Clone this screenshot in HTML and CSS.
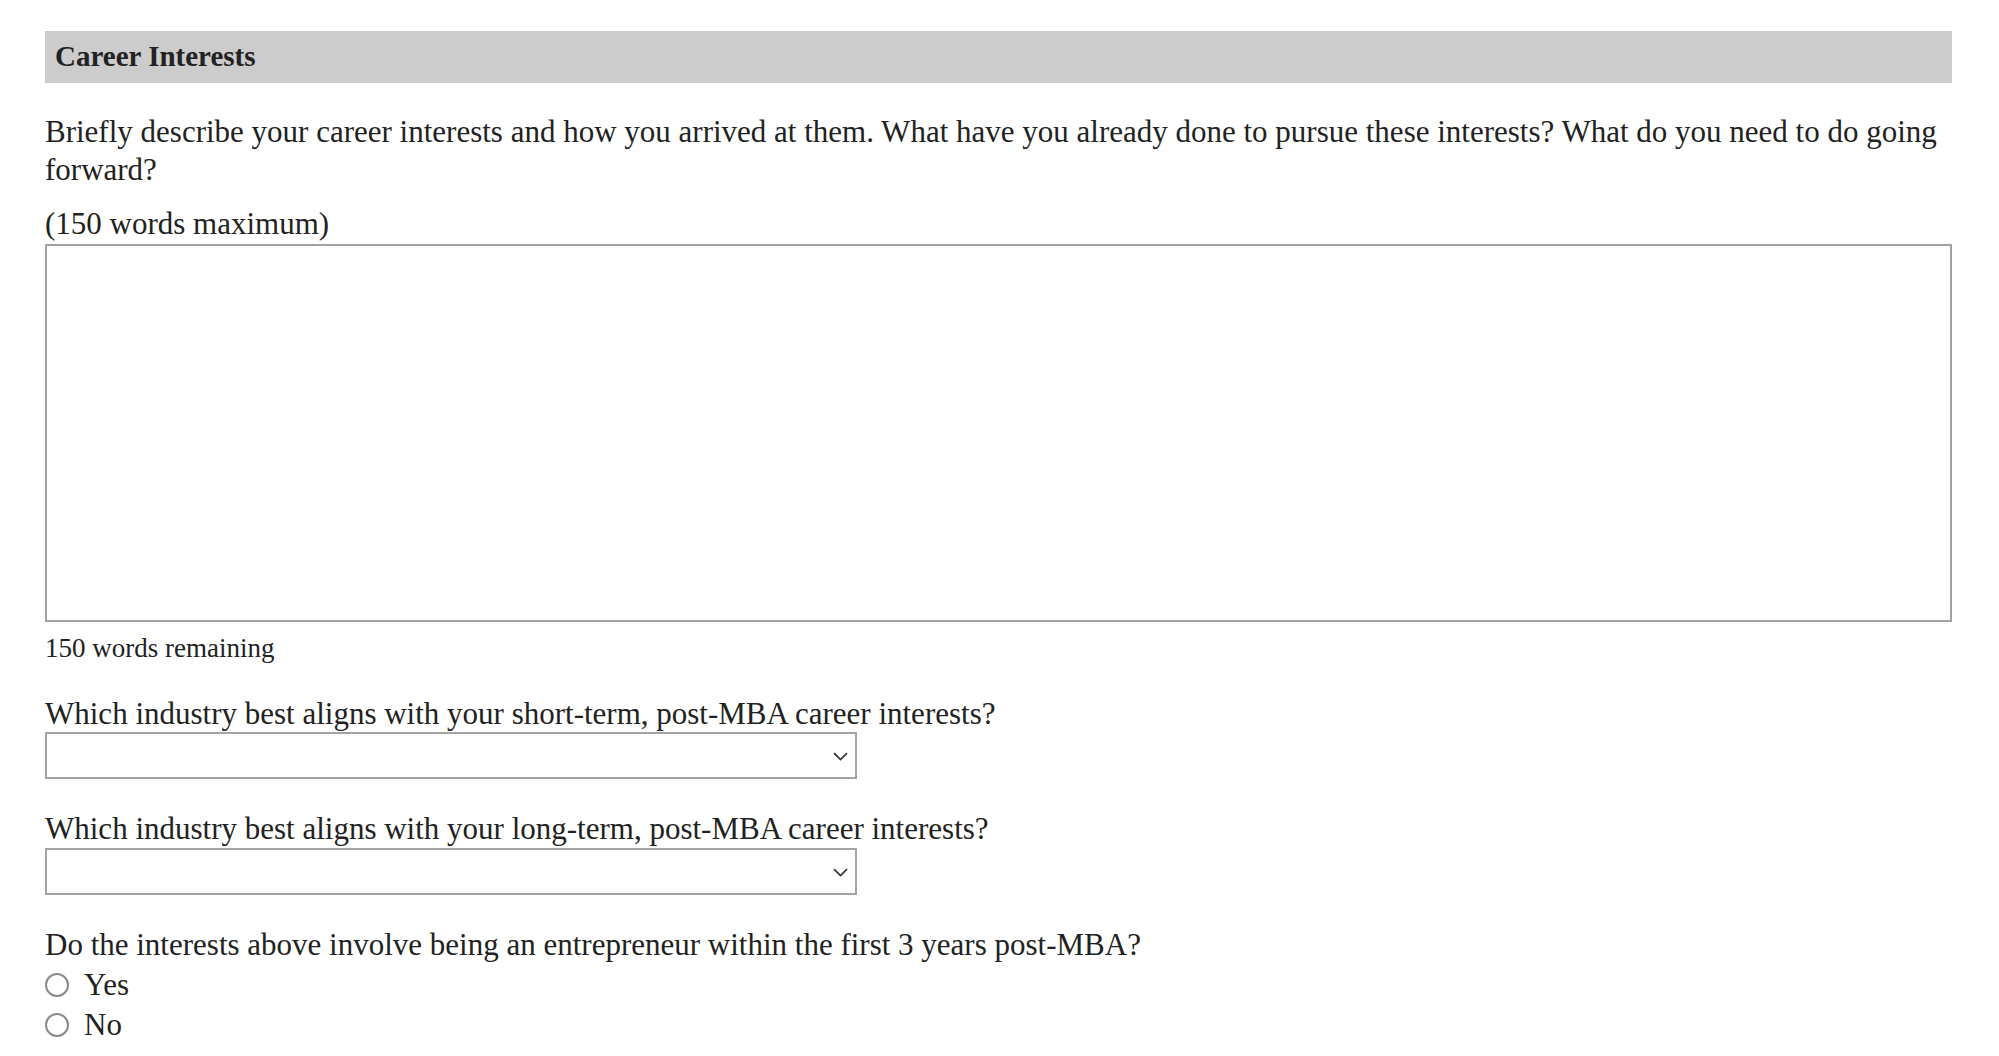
FILE: index.html
```html
<!DOCTYPE html>
<html lang="en">
<head>
<meta charset="utf-8">
<title>Career Interests</title>
<link rel="stylesheet" href="styles.css">
</head>
<body>
<main class="form">
  <h2 class="section-header">Career Interests</h2>
  <p class="prompt">Briefly describe your career interests and how you arrived at them. What have you already done to pursue these interests? What do you need to do going forward?</p>
  <label class="hint" for="essay">(150 words maximum)</label>
  <textarea id="essay" class="essay"></textarea>
  <div class="counter">150 words remaining</div>

  <label class="question" for="short">Which industry best aligns with your short-term, post-MBA career interests?</label>
  <div class="select-wrap">
    <select id="short" class="select"><option></option></select>
    <svg class="chevron" width="15" height="9" viewBox="0 0 15 9"><path d="M1 1.2 L7.5 7.5 L14 1.2" fill="none" stroke="#333" stroke-width="1.7"/></svg>
  </div>

  <label class="question" for="long">Which industry best aligns with your long-term, post-MBA career interests?</label>
  <div class="select-wrap">
    <select id="long" class="select"><option></option></select>
    <svg class="chevron" width="15" height="9" viewBox="0 0 15 9"><path d="M1 1.2 L7.5 7.5 L14 1.2" fill="none" stroke="#333" stroke-width="1.7"/></svg>
  </div>

  <div class="question">Do the interests above involve being an entrepreneur within the first 3 years post-MBA?</div>
  <div class="radios">
    <label class="radio"><span class="dot"></span>Yes</label>
    <label class="radio"><span class="dot"></span>No</label>
  </div>
</main>
</body>
</html>
```

FILE: styles.css
```css
* { box-sizing: border-box; }
html, body { margin: 0; padding: 0; background: #fff; }
body {
  font-family: "Liberation Serif", "Times New Roman", serif;
  color: #222;
  font-size: 31px;
  line-height: 37.5px;
}
.form {
  width: 1907px;
  margin-left: 45px;
  padding-top: 31px;
  display: flex;
  flex-direction: column;
}
.section-header {
  margin: 0;
  height: 52px;
  background: #cccccc;
  padding-left: 10px;
  display: flex;
  align-items: center;
  font-size: 29px;
  font-weight: bold;
  color: #222;
}
.prompt {
  margin: 30px 0 0 0;
}
.hint {
  margin-top: 17px;
  display: block;
}
.essay {
  margin-top: 1px;
  width: 100%;
  height: 378px;
  border: 2px solid #a3a3a3;
  resize: none;
  font: inherit;
  background: #fff;
}
.counter {
  margin-top: 10px;
  font-size: 27px;
  line-height: 32px;
}
.question {
  margin-top: 31px;
  display: block;
}
.select-wrap {
  position: relative;
  width: 812px;
  height: 47px;
  margin-top: 0;
}
.select {
  appearance: none;
  -webkit-appearance: none;
  width: 100%;
  height: 100%;
  border: 2px solid #a3a3a3;
  border-radius: 0;
  background: #fff;
  font: inherit;
}
.chevron {
  position: absolute;
  right: 9px;
  top: 20px;
}
.radios {
  margin-top: 2px;
  display: flex;
  flex-direction: column;
}
.radio {
  display: flex;
  align-items: center;
  height: 40px;
  gap: 15px;
}
.dot {
  width: 24px;
  height: 24px;
  border: 2px solid #8a8a8a;
  border-radius: 50%;
  background: #fff;
  flex: none;
}
```
